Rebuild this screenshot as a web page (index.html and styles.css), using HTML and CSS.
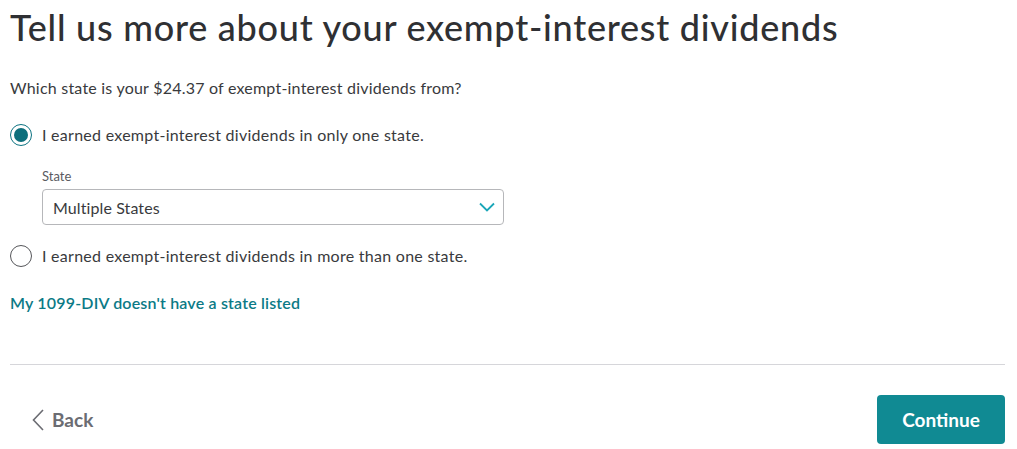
FILE: index.html
```html
<!DOCTYPE html>
<html>
<head>
<meta charset="utf-8">
<link rel="stylesheet" href="styles.css">
</head>
<body>
<main class="page">
  <h1 class="title">Tell us more about your exempt-interest dividends</h1>
  <p class="question">Which state is your $24.37 of exempt-interest dividends from?</p>
  <div class="options">
    <label class="option">
      <span class="radio radio-on"><span class="dot"></span></span>
      <span class="option-text">I earned exempt-interest dividends in only one state.</span>
    </label>
    <div class="field">
      <div class="field-label">State</div>
      <div class="select">
        <span class="select-value">Multiple States</span>
        <svg class="chev" width="16" height="10" viewBox="0 0 16 10"><path d="M1 1.5 L8 8.5 L15 1.5" fill="none" stroke="#1aa6b8" stroke-width="1.8"/></svg>
      </div>
    </div>
    <label class="option">
      <span class="radio"></span>
      <span class="option-text">I earned exempt-interest dividends in more than one state.</span>
    </label>
  </div>
  <a class="link" href="#">My 1099-DIV doesn't have a state listed</a>
  <hr class="divider">
  <div class="footer">
    <a class="back" href="#">
      <svg width="12" height="22" viewBox="0 0 12 22"><path d="M11 1 L1.5 11 L11 21" fill="none" stroke="#6b6c72" stroke-width="1.6"/></svg>
      <span>Back</span>
    </a>
    <button class="continue">Continue</button>
  </div>
</main>
</body>
</html>
```
FILE: styles.css
```css
* { box-sizing: border-box; }
html, body { margin: 0; background: #fff; }
body {
  font-family: "Lato", "Noto Sans", sans-serif;
  color: #393a3d;
}
.page {
  padding: 0 12px 0 10px;
}
.title {
  margin: 0;
  padding-top: 4px;
  font-size: 36px;
  line-height: 46px;
  font-weight: 500;
  letter-spacing: 0.75px;
  color: #2f3033;
}
.question {
  margin: 27px 0 0;
  font-size: 16px;
  line-height: 22px;
  letter-spacing: 0.22px;
}
.options { margin-top: 25px; }
.option {
  display: flex;
  align-items: center;
  gap: 10px;
  font-size: 16px;
  line-height: 22px;
  letter-spacing: 0.27px;
}
.radio {
  width: 22px;
  height: 22px;
  border-radius: 50%;
  border: 1.5px solid #55565a;
  display: flex;
  align-items: center;
  justify-content: center;
  flex: none;
}
.radio-on { border-color: #0d7382; }
.dot {
  width: 14px;
  height: 14px;
  border-radius: 50%;
  background: #0d6f7c;
}
.field {
  margin: 21px 0 20px 32px;
  width: 462px;
}
.field-label {
  font-size: 13px;
  line-height: 18px;
  color: #5a5b5f;
  margin-bottom: 4px;
}
.select {
  height: 36px;
  border: 1px solid #b6b7ba;
  border-radius: 4px;
  display: flex;
  align-items: center;
  justify-content: space-between;
  padding: 0 8px 0 10px;
  font-size: 16px;
  letter-spacing: 0.1px;
  color: #393a3d;
}
.link {
  display: block;
  margin-top: 25px;
  font-size: 16px;
  line-height: 22px;
  font-weight: 600;
  letter-spacing: 0.18px;
  color: #0b7a86;
  text-decoration: none;
}
.divider {
  margin: 50px 0 0;
  border: 0;
  border-top: 1px solid #d6d6da;
}
.footer {
  display: flex;
  align-items: center;
  justify-content: space-between;
  margin-top: 30px;
}
.back {
  display: flex;
  align-items: center;
  gap: 8px;
  margin-left: 22px;
  font-size: 19px;
  font-weight: 700;
  color: #6b6c72;
  text-decoration: none;
}
.continue {
  width: 128px;
  height: 49px;
  border: 0;
  border-radius: 4px;
  background: #108a93;
  color: #fff;
  font-family: inherit;
  font-size: 19px;
  font-weight: 700;
}
```
